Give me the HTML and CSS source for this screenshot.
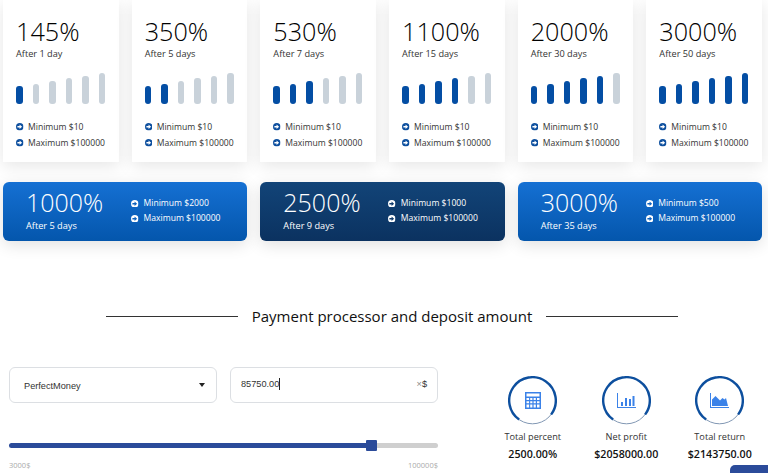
FILE: index.html
```html
<!DOCTYPE html>
<html lang="en">
<head>
    <meta charset="UTF-8">
    <meta name="viewport" content="width=device-width, initial-scale=1.0">
    <title>Investment plans</title>
    <link rel="stylesheet" href="styles.css">
</head>
<body>
    <svg class="sprite" width="0" height="0">
        <symbol id="arrow" viewBox="0 0 16 16">
            <circle cx="8" cy="8" r="8" fill="currentColor"/>
            <path class="arrow-head" d="M3 6.4h4.6V3.2L13 8l-5.4 4.8V9.6H3z"/>
        </symbol>
        <symbol id="ring" viewBox="0 0 49 49">
            <circle cx="24.5" cy="24.5" r="23.3" fill="none" stroke="#8298b4" stroke-width="1"/>
            <circle cx="24.5" cy="24.5" r="23.3" fill="none" stroke="#0d4f9e" stroke-width="2.4" stroke-dasharray="110 147" transform="rotate(125 24.5 24.5)"/>
        </symbol>
    </svg>

    <section class="cards">
        <div class="card">
            <div class="card-pct">145%</div>
            <div class="card-after">After 1 day</div>
            <div class="bars">
                <i class="on"></i><i></i><i></i><i></i><i></i><i></i>
            </div>
            <ul class="limits">
                <li><svg class="dot"><use href="#arrow"/></svg>Minimum $10</li>
                <li><svg class="dot"><use href="#arrow"/></svg>Maximum $100000</li>
            </ul>
        </div>
        <div class="card">
            <div class="card-pct">350%</div>
            <div class="card-after">After 5 days</div>
            <div class="bars">
                <i class="on"></i><i class="on"></i><i></i><i></i><i></i><i></i>
            </div>
            <ul class="limits">
                <li><svg class="dot"><use href="#arrow"/></svg>Minimum $10</li>
                <li><svg class="dot"><use href="#arrow"/></svg>Maximum $100000</li>
            </ul>
        </div>
        <div class="card">
            <div class="card-pct">530%</div>
            <div class="card-after">After 7 days</div>
            <div class="bars">
                <i class="on"></i><i class="on"></i><i class="on"></i><i></i><i></i><i></i>
            </div>
            <ul class="limits">
                <li><svg class="dot"><use href="#arrow"/></svg>Minimum $10</li>
                <li><svg class="dot"><use href="#arrow"/></svg>Maximum $100000</li>
            </ul>
        </div>
        <div class="card">
            <div class="card-pct">1100%</div>
            <div class="card-after">After 15 days</div>
            <div class="bars">
                <i class="on"></i><i class="on"></i><i class="on"></i><i class="on"></i><i></i><i></i>
            </div>
            <ul class="limits">
                <li><svg class="dot"><use href="#arrow"/></svg>Minimum $10</li>
                <li><svg class="dot"><use href="#arrow"/></svg>Maximum $100000</li>
            </ul>
        </div>
        <div class="card">
            <div class="card-pct">2000%</div>
            <div class="card-after">After 30 days</div>
            <div class="bars">
                <i class="on"></i><i class="on"></i><i class="on"></i><i class="on"></i><i class="on"></i><i></i>
            </div>
            <ul class="limits">
                <li><svg class="dot"><use href="#arrow"/></svg>Minimum $10</li>
                <li><svg class="dot"><use href="#arrow"/></svg>Maximum $100000</li>
            </ul>
        </div>
        <div class="card">
            <div class="card-pct">3000%</div>
            <div class="card-after">After 50 days</div>
            <div class="bars">
                <i class="on"></i><i class="on"></i><i class="on"></i><i class="on"></i><i class="on"></i><i class="on"></i>
            </div>
            <ul class="limits">
                <li><svg class="dot"><use href="#arrow"/></svg>Minimum $10</li>
                <li><svg class="dot"><use href="#arrow"/></svg>Maximum $100000</li>
            </ul>
        </div>
    </section>

    <section class="plans">
        <div class="plan">
            <div class="plan-main">
                <div class="plan-pct">1000%</div>
                <div class="plan-after">After 5 days</div>
            </div>
            <ul class="plan-limits">
                <li><svg class="dot"><use href="#arrow"/></svg>Minimum $2000</li>
                <li><svg class="dot"><use href="#arrow"/></svg>Maximum $100000</li>
            </ul>
        </div>
        <div class="plan plan-dark">
            <div class="plan-main">
                <div class="plan-pct">2500%</div>
                <div class="plan-after">After 9 days</div>
            </div>
            <ul class="plan-limits">
                <li><svg class="dot"><use href="#arrow"/></svg>Minimum $1000</li>
                <li><svg class="dot"><use href="#arrow"/></svg>Maximum $100000</li>
            </ul>
        </div>
        <div class="plan">
            <div class="plan-main">
                <div class="plan-pct">3000%</div>
                <div class="plan-after">After 35 days</div>
            </div>
            <ul class="plan-limits">
                <li><svg class="dot"><use href="#arrow"/></svg>Minimum $500</li>
                <li><svg class="dot"><use href="#arrow"/></svg>Maximum $100000</li>
            </ul>
        </div>
    </section>

    <h2 class="title">Payment processor and deposit amount</h2>

    <section class="calc">
        <div class="calc-form">
            <div class="fields">
                <div class="field field-select">
                    <span>PerfectMoney</span>
                    <span class="caret-down"></span>
                </div>
                <div class="field field-amount">
                    <span class="amount">85750.00</span>
                    <span class="unit"><span class="clear">×</span>$</span>
                </div>
            </div>
            <div class="slider">
                <div class="slider-fill"></div>
                <div class="slider-thumb"></div>
                <div class="slider-rest"></div>
            </div>
            <div class="slider-labels">
                <span>3000$</span>
                <span>100000$</span>
            </div>
        </div>
        <div class="calc-side">
            <div class="stats">
                <div class="stat">
                    <div class="stat-icon">
                        <svg class="ring"><use href="#ring"/></svg>
                        <svg class="glyph" viewBox="0 0 16 17">
                            <path fill="#3b82e8" fill-rule="evenodd" d="M0 0h16v17H0zM1.5 1.5v3h13v-3zM1.5 6v2h2.6V6zM5.2 6v2h2.2V6zM8.6 6v2h2.2V6zM12 6v2h2.5V6zM1.5 9.2v2h2.6v-2zM5.2 9.2v2h2.2v-2zM8.6 9.2v2h2.2v-2zM12 9.2v2h2.5v-2zM1.5 12.4v3h2.6v-3zM5.2 12.4v3h2.2v-3zM8.6 12.4v3h2.2v-3zM12 12.4v3h2.5v-3z"/>
                        </svg>
                    </div>
                    <div class="stat-label">Total percent</div>
                    <div class="stat-value">2500.00%</div>
                </div>
                <div class="stat">
                    <div class="stat-icon">
                        <svg class="ring"><use href="#ring"/></svg>
                        <svg class="glyph glyph-wide" viewBox="0 0 19 15">
                            <path fill="#3b82e8" d="M0 0h1v14h18v1H0zM4 9h2v4H4zM8 5h2v8H8zM12 6h2v7h-2zM15.5 3h2v10h-2z"/>
                        </svg>
                    </div>
                    <div class="stat-label">Net profit</div>
                    <div class="stat-value">$2058000.00</div>
                </div>
                <div class="stat">
                    <div class="stat-icon">
                        <svg class="ring"><use href="#ring"/></svg>
                        <svg class="glyph glyph-wide" viewBox="0 0 19 15">
                            <path fill="#3b82e8" d="M0 0h1v14h18v1H0zM2 13V6.5L5.5 3 8 5.5l2 2 2.5-2.5 2 1.5 1.5-1.5L18 13z"/>
                        </svg>
                    </div>
                    <div class="stat-label">Total return</div>
                    <div class="stat-value">$2143750.00</div>
                </div>
            </div>
            <div class="next-btn"></div>
        </div>
    </section>
</body>
</html>
```

FILE: styles.css
```css
html, body {
    height: 473px;
    overflow: hidden;
}

body {
    font-family: 'Open Sans', sans-serif;
    background-color: #fff;
    color: #333;
    margin: 0;
    padding: 0;
}

ul {
    list-style: none;
    margin: 0;
    padding: 0;
}

.sprite {
    display: block;
}

.arrow-head {
    fill: var(--arrow-head, #fff);
}

.dot {
    width: 7.5px;
    height: 7.5px;
    flex: none;
}

/* top row */
.cards {
    display: flex;
    gap: 13px;
    padding: 0 6px 0 3px;
}

.card {
    flex: 1;
    height: 162px;
    box-sizing: border-box;
    padding: 16px 0 0 13px;
    background-color: #fff;
    box-shadow: 0 4px 16px rgba(0, 0, 0, 0.1);
}

.card-pct {
    font-size: 25.2px;
    font-weight: 300;
    line-height: 30px;
    color: #000;
}

.card-after {
    font-size: 9.2px;
    line-height: 14px;
    margin-top: 1px;
}

.bars {
    display: flex;
    align-items: flex-end;
    gap: 10px;
    height: 31px;
    margin-top: 12px;
}

.bars i {
    display: block;
    width: 6.5px;
    border-radius: 3px;
    background-color: #c9d2da;
}

.bars i:nth-child(1) { height: 18px; }
.bars i:nth-child(2) { height: 20px; }
.bars i:nth-child(3) { height: 23px; }
.bars i:nth-child(4) { height: 26px; }
.bars i:nth-child(5) { height: 28px; }
.bars i:nth-child(6) { height: 31px; }

.bars i.on {
    background-color: #044ea4;
}

.limits {
    margin-top: 15px;
}

.limits li {
    display: flex;
    align-items: center;
    gap: 4.5px;
    font-size: 8.6px;
    line-height: 16px;
    white-space: nowrap;
}

.limits .dot {
    color: #0d4f9e;
}

/* blue plans */
.plans {
    display: flex;
    gap: 13px;
    padding: 20px 6px 0 3px;
}

.plan {
    --arrow-head: #0f62bd;
    flex: 1;
    height: 59px;
    display: flex;
    border-radius: 6px;
    color: #fff;
    background: linear-gradient(#1570d3, #0456ac);
    box-shadow: 0 4px 16px rgba(0, 0, 0, 0.12);
}

.plan-dark {
    --arrow-head: #0f3a6b;
    background: linear-gradient(#124478, #0b3260);
}

.plan-main {
    width: 128px;
    flex: none;
    padding: 4px 0 0 23px;
    box-sizing: border-box;
}

.plan-pct {
    font-size: 25px;
    font-weight: 300;
    line-height: 33px;
}

.plan-after {
    font-size: 9.2px;
    line-height: 14px;
}

.plan-limits {
    padding-top: 14px;
}

.plan-limits li {
    display: flex;
    align-items: center;
    gap: 5px;
    font-size: 8.6px;
    line-height: 15px;
    white-space: nowrap;
}

/* heading with lines */
.title {
    display: flex;
    align-items: center;
    gap: 14px;
    margin: 64px 90px 0 106px;
    font-size: 15px;
    font-weight: 400;
    line-height: 22px;
    color: #111;
    white-space: nowrap;
}

.title::before,
.title::after {
    content: "";
    flex: 1;
    height: 1px;
    background-color: #333;
}

/* calculator */
.calc {
    display: flex;
    padding: 40px 0 0 9px;
}

.calc-form {
    width: 429px;
    flex: none;
}

.fields {
    display: grid;
    grid-template-columns: 1fr 1fr;
    gap: 13px;
}

.field {
    height: 36px;
    box-sizing: border-box;
    display: flex;
    align-items: center;
    justify-content: space-between;
    border: 1px solid #dcdfe3;
    border-radius: 6px;
    font-family: 'Liberation Sans', Arial, sans-serif;
    font-size: 9.2px;
    color: #333;
}

.field-select {
    padding: 2px 11px 0 14px;
}

.caret-down {
    width: 0;
    height: 0;
    margin-bottom: 3px;
    border-left: 3px solid transparent;
    border-right: 3px solid transparent;
    border-top: 4px solid #222;
}

.field-amount {
    padding: 0 10px 3px 10px;
}

.amount {
    border-right: 1px solid #222;
    line-height: 12px;
}

.clear {
    color: #888;
}

.slider {
    display: flex;
    align-items: center;
    height: 11px;
    margin-top: 37px;
}

.slider-fill {
    width: 357px;
    height: 5px;
    border-radius: 3px 0 0 3px;
    background-color: #2b4b9a;
}

.slider-thumb {
    width: 11px;
    height: 11px;
    border-radius: 1px;
    background-color: #2b4b9a;
}

.slider-rest {
    flex: 1;
    height: 5px;
    border-radius: 0 3px 3px 0;
    background-color: #cfcfcf;
}

.slider-labels {
    display: flex;
    justify-content: space-between;
    margin-top: 8px;
    font-size: 7.5px;
    line-height: 12px;
    color: #aaa;
}

.calc-side {
    flex: 1;
    display: flex;
    flex-direction: column;
}

.stats {
    display: flex;
    padding: 9px 0 0 48px;
}

.stat {
    width: 93.5px;
    flex: none;
    display: flex;
    flex-direction: column;
    align-items: center;
    white-space: nowrap;
}

.stat-icon {
    width: 49px;
    height: 49px;
    display: grid;
    place-items: center;
}

.stat-icon > svg {
    grid-area: 1 / 1;
}

.ring {
    width: 49px;
    height: 49px;
}

.glyph {
    width: 16px;
    height: 17px;
}

.glyph-wide {
    width: 19px;
    height: 15px;
}

.stat-label {
    margin-top: 4px;
    font-size: 9.2px;
    line-height: 16px;
}

.stat-value {
    margin-top: 1px;
    font-size: 10.7px;
    font-weight: 600;
    line-height: 16px;
    color: #111;
}

.next-btn {
    align-self: flex-end;
    width: 38px;
    height: 30px;
    margin-top: 3px;
    border-radius: 5px 0 0 0;
    background-color: #2b4b9a;
}
```
